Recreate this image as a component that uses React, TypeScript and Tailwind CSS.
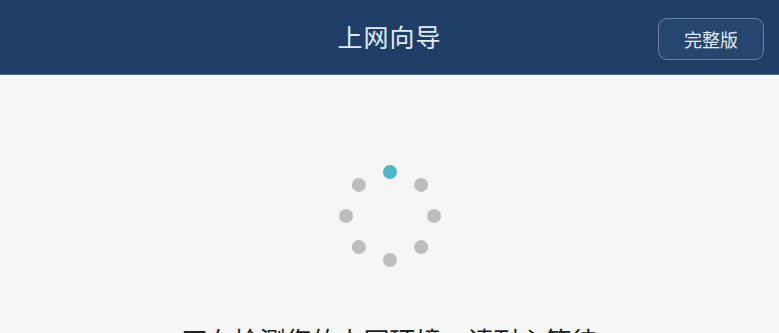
export default function App() {
  const dots = [0, 1, 2, 3, 4, 5, 6, 7].map((i) => {
    const a = (i * Math.PI) / 4;
    return { cx: 55 + 44 * Math.sin(a), cy: 55 - 44 * Math.cos(a), first: i === 0 };
  });

  return (
    <div
      className="h-[333px] w-[779px] overflow-hidden bg-[#f6f6f6]"
      style={{ fontFamily: '"Noto Sans CJK SC", "Noto Sans", sans-serif' }}
    >
      <header className="relative flex h-[75px] items-center justify-center border-b border-[#4c6686] bg-[#1f3f67]">
        <h1 className="text-[25px] font-normal tracking-[1px] text-[#e2ebf5]">上网向导</h1>
        <button className="absolute right-[15px] top-[18px] flex h-[42px] w-[106px] items-center justify-center rounded-[9px] border border-[#6983a5] bg-[#24466f] text-[18px] text-[#e2ebf5]">
          完整版
        </button>
      </header>

      <main className="flex flex-col items-center pt-[86px]">
        <svg width="110" height="110" viewBox="0 0 110 110">
          {dots.map((d, i) => (
            <circle key={i} cx={d.cx} cy={d.cy} r="7" fill={d.first ? "#4fb6c5" : "#bdbdbd"} />
          ))}
        </svg>
        <p className="mt-[56px] text-[26px] leading-none text-[#222]">正在检测您的上网环境，请耐心等待</p>
      </main>
    </div>
  );
}
